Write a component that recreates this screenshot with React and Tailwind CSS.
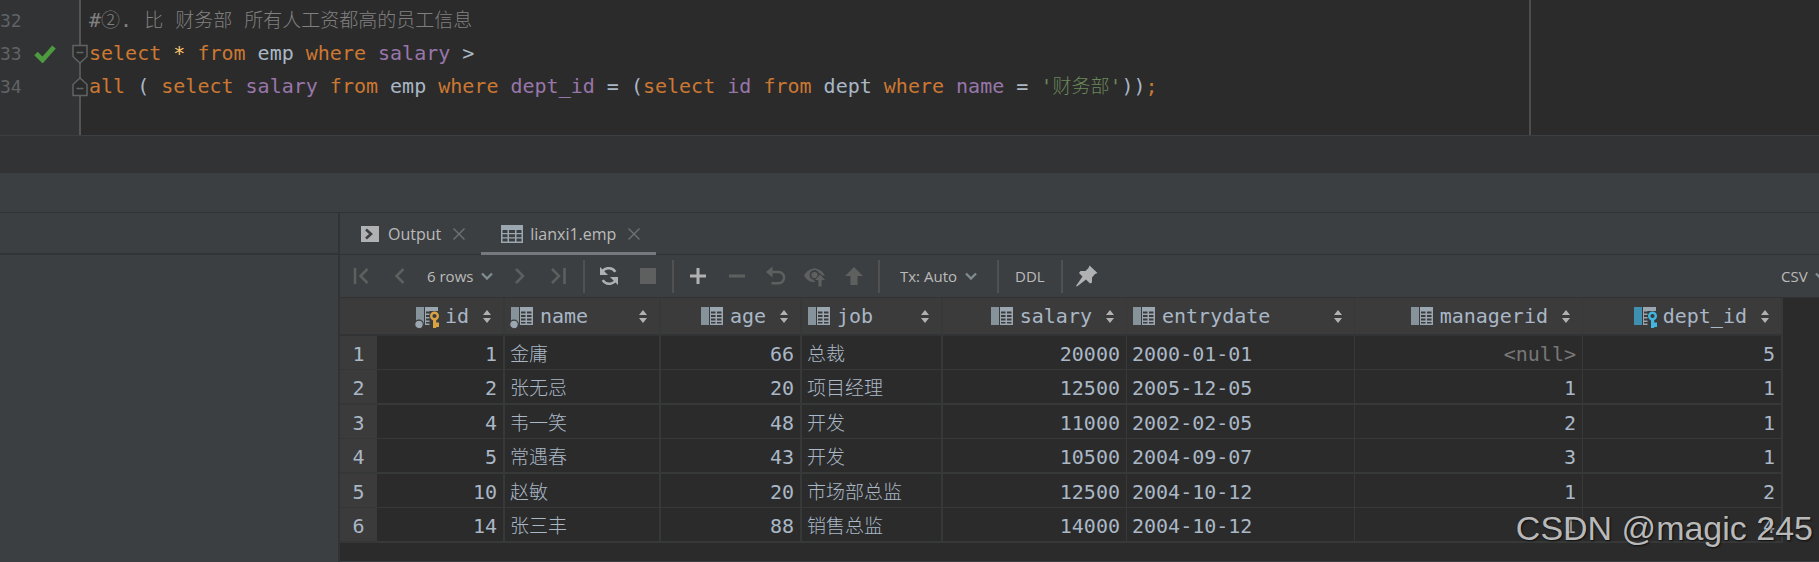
import clsx from "clsx";

const codeLines = [
  {
    number: 32,
    tokens: [
      ["comment", "#"],
      ["comment", "②", true],
      ["comment", ". "],
      ["comment", "比", true],
      ["comment", " "],
      ["comment", "财务部", true],
      ["comment", " "],
      ["comment", "所有人工资都高的员工信息", true],
    ],
  },
  {
    number: 33,
    passed: true,
    fold: "open",
    tokens: [
      ["keyword", "select "],
      ["star", "*"],
      ["keyword", " from "],
      ["plain", "emp "],
      ["keyword", "where "],
      ["column", "salary "],
      ["plain", ">"],
    ],
  },
  {
    number: 34,
    fold: "close",
    tokens: [
      ["keyword", "all "],
      ["plain", "( "],
      ["keyword", "select "],
      ["column", "salary "],
      ["keyword", "from "],
      ["plain", "emp "],
      ["keyword", "where "],
      ["column", "dept_id "],
      ["plain", "= ("],
      ["keyword", "select "],
      ["column", "id "],
      ["keyword", "from "],
      ["plain", "dept "],
      ["keyword", "where "],
      ["column", "name "],
      ["plain", "= "],
      ["string", "'"],
      ["string", "财务部", true],
      ["string", "'"],
      ["plain", "))"],
      ["keyword", ";"],
    ],
  },
];

const tokenColors = {
  comment: "text-[#808080]",
  keyword: "text-[#cc7832]",
  star: "text-[#ffc66d]",
  plain: "text-[#a9b7c6]",
  column: "text-[#9876aa]",
  string: "text-[#6a8759]",
};

const columns = [
  { key: "id", width: "w-[128px]", border: "border-r-2", right: true, icon: "primary" },
  { key: "name", width: "w-[156px]", border: "border-r-2", icon: "indexed" },
  { key: "age", width: "w-[141px]", border: "border-r-2", right: true },
  { key: "job", width: "w-[141px]", border: "border-r-2" },
  { key: "salary", width: "w-[184px]", border: "border-r", right: true },
  { key: "entrydate", width: "w-[228px]", border: "border-r" },
  { key: "managerid", width: "w-[228px]", border: "border-r", right: true },
  { key: "dept_id", width: "w-[200px]", border: "border-r-2", right: true, icon: "foreign" },
];

const rows = [
  { id: 1, name: "金庸", age: 66, job: "总裁", salary: 20000, entrydate: "2000-01-01", managerid: null, dept_id: 5 },
  { id: 2, name: "张无忌", age: 20, job: "项目经理", salary: 12500, entrydate: "2005-12-05", managerid: 1, dept_id: 1 },
  { id: 4, name: "韦一笑", age: 48, job: "开发", salary: 11000, entrydate: "2002-02-05", managerid: 2, dept_id: 1 },
  { id: 5, name: "常遇春", age: 43, job: "开发", salary: 10500, entrydate: "2004-09-07", managerid: 3, dept_id: 1 },
  { id: 10, name: "赵敏", age: 20, job: "市场部总监", salary: 12500, entrydate: "2004-10-12", managerid: 1, dept_id: 2 },
  { id: 14, name: "张三丰", age: 88, job: "销售总监", salary: 14000, entrydate: "2004-10-12", managerid: 1, dept_id: 4 },
];

function FoldMarker({ type }) {
  return (
    <svg
      className="absolute top-1/2 -right-[9px] -translate-y-1/2"
      width="16"
      height="20"
      viewBox="0 0 16 20"
      fill="#2b2b2b"
      stroke="#606366"
      strokeWidth="1.5"
    >
      {type === "open" ? (
        <path d="M1 1.5h14v11l-7 6.500l-7-6.500z M4.500 8.500h7" />
      ) : (
        <path d="M1 18.500h14v-11l-7-6.500l-7 6.500z M4.500 11.500h7" />
      )}
    </svg>
  );
}

function Editor() {
  return (
    <section className="relative flex h-[135px] overflow-hidden bg-[#2b2b2b] font-['DejaVu_Sans_Mono','Noto_Sans_CJK_SC',monospace]">
      <div className="w-[81px] shrink-0 border-r-2 border-[#555555] bg-[#313335] pt-1">
        {codeLines.map((line) => (
          <div key={line.number} className="relative flex h-[33px] items-center">
            <span className="w-[34px] text-[18px] text-[#606366]">{line.number}</span>
            {line.passed && (
              <svg width="22" height="18" viewBox="0 0 22 18" fill="none">
                <path d="M2 8.500l6.500 6.500L20 2" stroke="#4e9a3f" strokeWidth="4.800" />
              </svg>
            )}
            {line.fold && <FoldMarker type={line.fold} />}
          </div>
        ))}
      </div>
      <div className="w-[1450px] border-r-2 border-[#4d4d4d] pt-1 pl-2">
        {codeLines.map((line) => (
          <pre
            key={line.number}
            className="h-[33px] font-['DejaVu_Sans_Mono','Noto_Sans_CJK_SC',monospace] text-[20px] leading-[33px]"
          >
            {line.tokens.map(([type, text, cjk], i) => (
              <span key={i} className={clsx(tokenColors[type], cjk && "text-[19px] font-light")}>
                {text}
              </span>
            ))}
          </pre>
        ))}
      </div>
    </section>
  );
}

function Close({ label }) {
  return (
    <button type="button" aria-label={label} className="text-[#6e7274]">
      <svg width="12" height="12" viewBox="0 0 12 12" stroke="currentColor" strokeWidth="1.400">
        <path d="M.5.5l11 11M11.500.5l-11 11" />
      </svg>
    </button>
  );
}

function Tabs() {
  return (
    <div className="flex h-[42px] shrink-0 border-b border-[#323232] text-base text-[#bbbbbb]">
      <div className="-mb-px flex items-center gap-3 border-b-[3px] border-transparent pt-[3px] pr-4 pl-[21px]">
        <button type="button" className="flex items-center gap-[9px]">
          <svg width="18" height="16" viewBox="0 0 18 16">
            <path d="M0 0h18v16H0z" fill="#afb1b3" />
            <path d="M5 3.500l5 4.500l-5 4.500" fill="none" stroke="#3c3f41" strokeWidth="2.600" />
          </svg>
          Output
        </button>
        <Close label="Close Output" />
      </div>
      <div className="-mb-px flex items-center gap-3 border-b-[3px] border-[#747a80] pt-[3px] pr-4 pl-5">
        <button type="button" className="flex items-center gap-[7px]">
          <svg width="22" height="18" viewBox="0 0 22 18">
            <path d="M0 0h22v18H0z" fill="#9aa7b0" />
            <path
              d="M1.500 5h5v3h-5zM8 5h6v3H8zM15.500 5h5v3h-5zM1.500 9.300h5v3h-5zM8 9.300h6v3H8zM15.500 9.300h5v3h-5zM1.500 13.600h5v3h-5zM8 13.600h6v3H8zM15.500 13.600h5v3h-5z"
              fill="#3c3f41"
            />
          </svg>
          lianxi1.emp
        </button>
        <Close label="Close lianxi1.emp" />
      </div>
    </div>
  );
}

function Tool({ label, dim, children }) {
  return (
    <button type="button" aria-label={label} className={dim ? "text-[#5e6060]" : "text-[#afb1b3]"}>
      <svg
        width="24"
        height="24"
        viewBox="0 0 24 24"
        fill="none"
        stroke="currentColor"
        strokeWidth="2.500"
      >
        {children}
      </svg>
    </button>
  );
}

function Dropdown({ label, value, className }) {
  return (
    <label className={clsx("flex items-center gap-[7px]", className)}>
      <select aria-label={label} className="appearance-none bg-transparent">
        <option>{value}</option>
      </select>
      <svg width="12" height="8" viewBox="0 0 12 8" fill="none" stroke="#7f8b91" strokeWidth="2.400">
        <path d="M1 1.500l5 5l5-5" />
      </svg>
    </label>
  );
}

function Separator() {
  return <div className="mx-3 h-[33px] w-[2px] shrink-0 bg-[#515151]" />;
}

function Toolbar() {
  return (
    <div className="flex h-[43px] shrink-0 items-center overflow-hidden border-b border-[#323232] pl-[9px] text-[15px] text-[#bbbbbb]">
      <div className="flex items-center gap-[15px]">
        <Tool label="First page" dim>
          <path d="M6 4v16M18.500 5l-7 7l7 7" />
        </Tool>
        <Tool label="Previous page" dim>
          <path d="M15.500 5l-7 7l7 7" />
        </Tool>
        <Dropdown label="Page size" value="6 rows" />
        <Tool label="Next page" dim>
          <path d="M8 5l7 7l-7 7" />
        </Tool>
        <Tool label="Last page" dim>
          <path d="M17.500 4v16M5 5l7 7l-7 7" />
        </Tool>
      </div>
      <Separator />
      <div className="flex items-center gap-[15px]">
        <Tool label="Reload">
          <path d="M4.500 10a7.600 7.600 0 0 1 13.800-2.200M19.500 14a7.600 7.600 0 0 1-13.800 2.200" />
          <path d="M3 3v8h8zM21 21v-8h-8z" fill="currentColor" stroke="none" />
        </Tool>
        <Tool label="Stop" dim>
          <path d="M4 4h16v16H4z" fill="currentColor" stroke="none" />
        </Tool>
      </div>
      <Separator />
      <div className="flex items-center gap-[15px]">
        <Tool label="Add row">
          <path d="M4 12h16M12 4v16" strokeWidth="3" />
        </Tool>
        <Tool label="Delete row" dim>
          <path d="M4 12h16" strokeWidth="3" />
        </Tool>
        <Tool label="Revert" dim>
          <path d="M7 8h7.500a5.600 5.600 0 0 1 0 11.200H7.500" />
          <path d="M2 8l6.500-5.500v11z" fill="currentColor" stroke="none" />
        </Tool>
        <Tool label="Preview changes" dim>
          <path
            d="M1 11.500C4 6.500 8 4.500 11.500 4.500s7.500 2 10.500 7l-2.500 0l-3.500-2.500l-4 4.500v4.500C7.500 18.500 4 16.500 1 11.500z"
            fill="currentColor"
            stroke="none"
          />
          <circle cx="11.500" cy="11" r="4" fill="#5e6060" stroke="#3c3f41" strokeWidth="1.800" />
          <path d="M17 10l6 6.500h-4V23h-4v-6.500h-4z" fill="currentColor" stroke="#3c3f41" strokeWidth="1" />
        </Tool>
        <Tool label="Submit" dim>
          <path d="M12 3l9 9h-5.500v9h-7v-9H3z" fill="currentColor" stroke="none" />
        </Tool>
      </div>
      <Separator />
      <Dropdown label="Transaction mode" value="Tx: Auto" className="px-2" />
      <Separator />
      <button type="button" className="px-1">
        DDL
      </button>
      <Separator />
      <Tool label="Pin tab">
        <path
          d="M14.500 1.500l8 7.500l-2.500 1l-3 3.500v5l-2 1l-4-4L2 22.500L1 22l6.500-9.500l-3.500-3.500l1.500-2h5l3-3z"
          fill="currentColor"
          stroke="none"
        />
      </Tool>
      <Dropdown label="Export format" value="CSV" className="-mr-2 ml-auto shrink-0" />
    </div>
  );
}

function ColumnIcon({ type }) {
  const keyColor = type === "foreign" ? "#40b6e0" : "#d9a343";
  const hasKey = type === "primary" || type === "foreign";

  return (
    <svg className="shrink-0 overflow-visible" width="22" height="18" viewBox="0 0 22 18">
      <path d="M0 0h8v18H0z" fill={type === "foreign" ? "#3e8fb0" : "#87939a"} />
      <path d="M9 0h13v18H9z" fill="#9aa7b0" />
      <path
        d="M10 4.500h4.500v2H10zM16 4.500h4.500v2H16zM10 8h4.500v2H10zM16 8h4.500v2H16zM10 11.500h4.500v2H10zM16 11.500h4.500v2H16zM10 15h4.500v1.500H10zM16 15h4.500v1.500H16z"
        fill="#3c3b3b"
      />
      {(type === "primary" || type === "indexed") && (
        <circle cx="3" cy="17.500" r="4.300" fill="#9aa7b0" stroke="#3c3b3b" strokeWidth="1.200" />
      )}
      {hasKey && (
        <>
          <path d="M13.500 4H22v14h-8.500z" fill="#3c3b3b" />
          <circle cx="18.500" cy="9" r="3.300" fill="none" stroke={keyColor} strokeWidth="2.400" />
          <path d="M17 12.500h3.200v3H23v4.500h-2.800v1H17z" fill={keyColor} />
        </>
      )}
    </svg>
  );
}

function SortArrows() {
  return (
    <svg className="shrink-0" width="8" height="13" viewBox="0 0 8 13" fill="#afb1b3">
      <path d="M4 0l4 5H0zM4 13l4-5H0z" />
    </svg>
  );
}

function ResultTable() {
  return (
    <table className="w-[1443px] table-fixed border-separate border-spacing-0 font-['DejaVu_Sans_Mono','Noto_Sans_CJK_SC',monospace] text-[20px] leading-[29px] text-[#a9b7c6]">
      <thead>
        <tr className="bg-[#3c3b3b]">
          <th className="w-[37px] border-b-2 border-[#313335]" />
          {columns.map((col) => (
            <th
              key={col.key}
              className={clsx(
                "border-b-2 border-b-[#313335] border-r-[#373838] p-0 font-normal",
                col.width,
                col.border
              )}
            >
              <button
                type="button"
                className={clsx(
                  "flex h-9 w-full items-center gap-[7px] pr-3 pl-1.5",
                  col.right && "justify-end"
                )}
              >
                <ColumnIcon type={col.icon} />
                {col.key}
                <span className={clsx("flex", col.right ? "pl-[7px]" : "ml-auto")}>
                  <SortArrows />
                </span>
              </button>
            </th>
          ))}
        </tr>
      </thead>
      <tbody>
        {rows.map((row, i) => (
          <tr key={row.id}>
            <th
              className={clsx(
                "border-[#353636] bg-[#3c3b3b] px-0 pt-1 pb-0 font-normal",
                i % 2 ? "border-b-2" : "border-b"
              )}
            >
              {i + 1}
            </th>
            {columns.map((col) => {
              const value = row[col.key];
              const cjk = col.key === "name" || col.key === "job";
              return (
                <td
                  key={col.key}
                  className={clsx(
                    "border-[#373838] pt-1 pb-0",
                    col.border,
                    i % 2 ? "border-b-2" : "border-b",
                    col.right ? "pr-1.5 text-right" : "pl-[5px]",
                    cjk && "text-[19px] font-light",
                    value === null && "text-[#777777]"
                  )}
                >
                  {value === null ? "<null>" : value}
                </td>
              );
            })}
          </tr>
        ))}
      </tbody>
    </table>
  );
}

export default function App() {
  return (
    <div className="relative flex min-h-screen flex-col overflow-hidden bg-[#3c3f41] font-['Open_Sans',sans-serif]">
      <Editor />
      <div className="h-[38px] shrink-0 border-t border-[#3c3f41] bg-[#313335]" />
      <div className="h-10 shrink-0 border-b border-[#323232]" />

      <main className="flex flex-1">
        <aside className="w-[340px] shrink-0 border-r-2 border-[#313335]">
          <div className="h-[42px] border-b-2 border-[#313335]" />
        </aside>
        <section className="flex min-w-0 flex-1 flex-col">
          <Tabs />
          <Toolbar />
          <div className="flex-1 overflow-hidden border-b border-[#3c3f41] bg-[#2b2b2b]">
            <ResultTable />
          </div>
        </section>
      </main>

      {/* Watermark */}
      <div className="pointer-events-none absolute right-1.5 bottom-3.5 font-['Liberation_Sans',sans-serif] text-[34px] leading-10 text-[#c4c4c4]/95 [text-shadow:1px_1px_2px_rgb(0_0_0/0.7)]">
        CSDN @magic 245
      </div>
    </div>
  );
}
